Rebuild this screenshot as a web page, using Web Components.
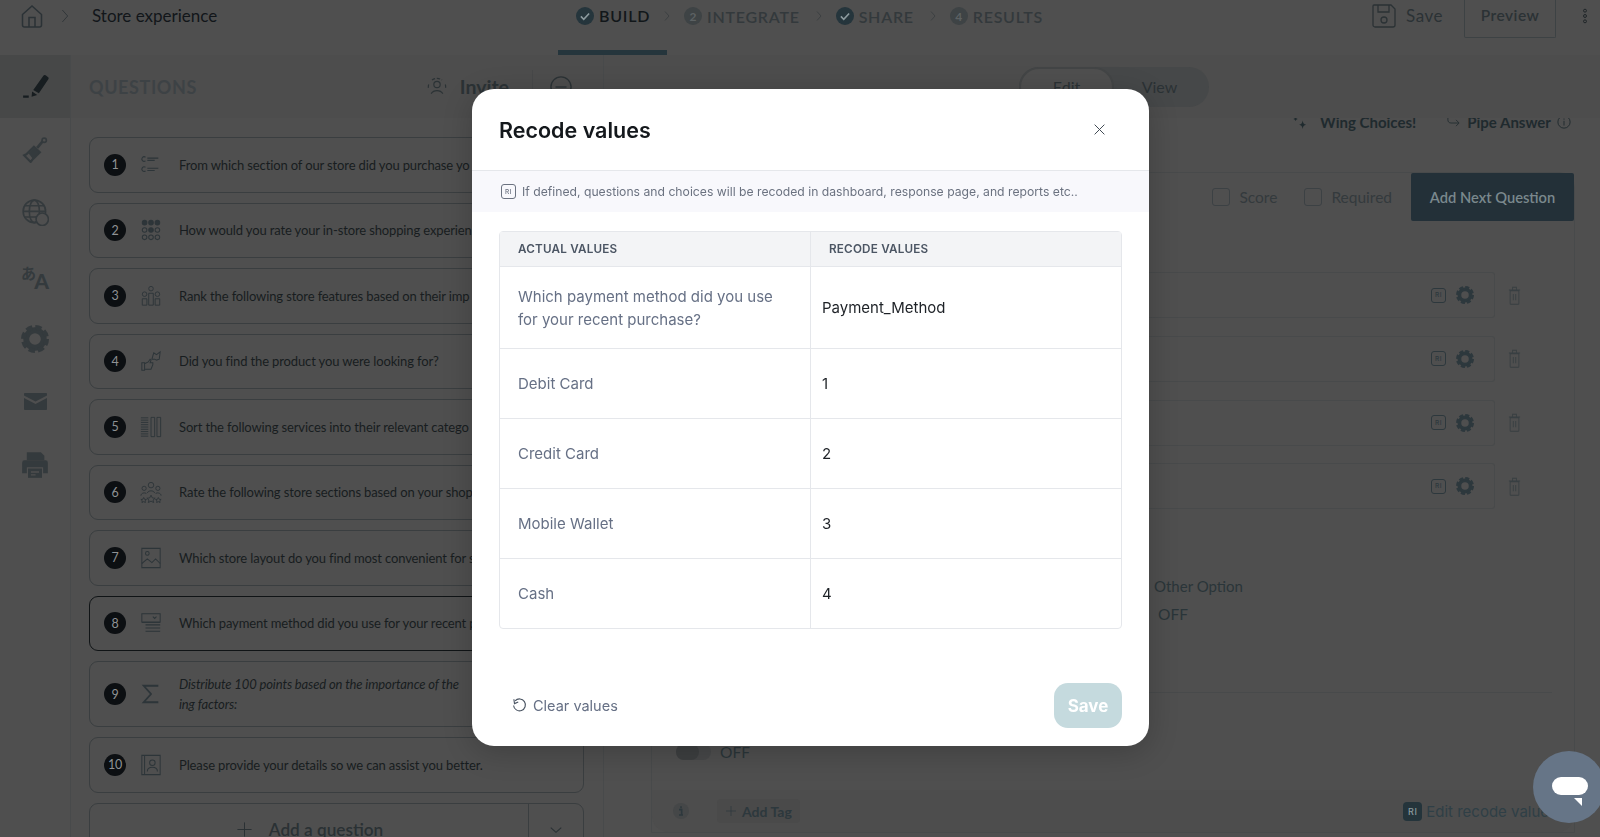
<!doctype html>
<html lang="en">
<head>
<meta charset="utf-8">
<title>Store experience</title>
<style>
html, body { margin: 0; height: 100%; overflow: hidden; background: #4f4f4f; }
</style>
</head>
<body>
<app-page></app-page>
<script>
const ICONS = {
	home: '<path d="M2.5 10.5 12 2l9.500 8.500V21a2 2 0 0 1-2 2h-15a2 2 0 0 1-2-2z" fill="none" stroke="currentColor" stroke-width="1.500"/><path d="M9 23v-9.500h6V23" fill="none" stroke="currentColor" stroke-width="1.500"/>',
	chevron: '<path d="M8 3l8 9-8 9" fill="none" stroke="currentColor" stroke-width="1.400"/>',
	down: '<path d="M3 8l9 8 9-8" fill="none" stroke="currentColor" stroke-width="1.800"/>',
	check: '<circle cx="12" cy="12" r="12" fill="currentColor"/><path d="M6.500 12.500l3.800 3.800 7.200-7.600" fill="none" stroke="#8c9a9e" stroke-width="2.200"/>',
	save: '<path d="M2 1h17l4 4v16a2 2 0 0 1-2 2H3a2 2 0 0 1-2-2V2a1 1 0 0 1 1-1z" fill="none" stroke="currentColor" stroke-width="1.300"/><path d="M6 1v7h11V1" fill="none" stroke="currentColor" stroke-width="1.300"/><circle cx="12" cy="16" r="3" fill="none" stroke="currentColor" stroke-width="1.300"/>',
	dots: '<g fill="none" stroke="currentColor" stroke-width="1.500"><circle cx="12" cy="4" r="2.200"/><circle cx="12" cy="12" r="2.200"/><circle cx="12" cy="20" r="2.200"/></g>',
	pencil: '<path d="M10 15 19 2.500a1.500 1.500 0 0 1 2-.400l2 1.500a1.500 1.500 0 0 1 .400 2L15 18z" fill="currentColor"/><path d="M9 16.500l4.500 3-5 1.500zM1 20h5v2H1z" fill="currentColor"/>',
	brush: '<path d="M11 9 4 16l-2 1 6 6 1.500-2 7-7z" fill="none" stroke="currentColor" stroke-width="2"/><path d="M6 15l5-5 5 4-6 6z" fill="currentColor"/><path d="M14 10l5-6" stroke="currentColor" stroke-width="2.500"/><circle cx="20.500" cy="3" r="2" fill="none" stroke="currentColor" stroke-width="1.500"/>',
	globe: '<g fill="none" stroke="currentColor" stroke-width="1.400"><circle cx="11" cy="11" r="10"/><ellipse cx="11" cy="11" rx="4.500" ry="10"/><path d="M1 11h20M2.500 6h17M2.500 16h17"/></g><circle cx="18" cy="18" r="5.500" fill="#4f4f4f" stroke="currentColor" stroke-width="1.400"/>',
	gear: '<circle cx="12" cy="12" r="7.500" fill="none" stroke="currentColor" stroke-width="5"/><circle cx="12" cy="12" r="10" fill="none" stroke="currentColor" stroke-width="4" stroke-dasharray="5.220 2.630"/>',
	mail: '<path d="M0 3.500 12 12 24 3.500V1a1 1 0 0 0-1-1H1a1 1 0 0 0-1 1zM0 7v16a1 1 0 0 0 1 1h22a1 1 0 0 0 1-1V7L12 15.500z" fill="currentColor"/>',
	printer: '<path d="M5 1h12l3 3v4H5z" fill="currentColor"/><path d="M1 10a2 2 0 0 1 2-2h18a2 2 0 0 1 2 2v9h-4v-5H5v5H1z" fill="currentColor"/><path d="M6 15h12v8H6z" fill="currentColor"/><path d="M8.500 18h7M8.500 20.500h4" stroke="#4f4f4f" stroke-width="1.200"/>',
	choice: '<g fill="none" stroke="currentColor" stroke-width="1.200"><path d="M6 3.500a2.500 2.500 0 1 0 0 4M6 14.500a2.500 2.500 0 1 0 0 4"/><path d="M8 4.500h12M8 7h8M8 15.500h12M8 18h8"/></g>',
	rating: '<g fill="none" stroke="currentColor" stroke-width="1.100"><circle cx="5" cy="4" r="2.500" fill="currentColor"/><circle cx="12" cy="4" r="2.500" fill="currentColor"/><circle cx="19" cy="4" r="2.500" fill="currentColor"/><circle cx="5" cy="12" r="2.500"/><circle cx="12" cy="12" r="2.500" fill="currentColor"/><circle cx="19" cy="12" r="2.500"/><circle cx="5" cy="20" r="2.500"/><circle cx="12" cy="20" r="2.500"/><circle cx="19" cy="20" r="2.500"/></g>',
	rank: '<g fill="none" stroke="currentColor" stroke-width="1"><circle cx="12" cy="4" r="2.500"/><circle cx="5" cy="10" r="2.500"/><circle cx="19" cy="10" r="2.500"/><path d="M2.500 15h5v7h-5zM9.500 9h5v13h-5zM16.500 15h5v7h-5z"/></g>',
	thumbs: '<g fill="none" stroke="currentColor" stroke-width="1.100"><path d="M2 14h3v8H2zM5 15l4-2 2-3 1 1-1 3h3v2l-2 5H5"/><path d="M13 10l2-7 3 2 4-3-1 8-3 1-2-1z"/></g>',
	bars: '<g fill="none" stroke="currentColor" stroke-width="1"><path d="M1 2h8M1 4.500h8M1 7h8M1 9.500h8M1 12h8M1 14.500h8M1 17h8M1 19.500h8M1 22h8"/><path d="M12 1.500h4v21h-4zM18.500 1.500h4v21h-4z"/></g>',
	people: '<g fill="none" stroke="currentColor" stroke-width="1"><circle cx="12" cy="4.500" r="3"/><circle cx="4.500" cy="8" r="2.300"/><circle cx="19.500" cy="8" r="2.300"/><path d="M8 13c1-3 7-3 8 0M1 16c0-3 5-4 6-2M23 16c0-3-5-4-6-2"/><path d="M12 15.500l1.500 3 3 .3-2.300 2 .7 2.700-2.900-1.500-2.900 1.500.7-2.700-2.300-2 3-.3zM4 18l1 2 2 .2-1.500 1.400.4 1.900L4 22.500l-1.900 1 .4-1.900L1 20.200l2-.2zM20 18l1 2 2 .2-1.500 1.400.4 1.900-1.900-1-1.900 1 .4-1.900-1.500-1.400 2-.2z"/></g>',
	image: '<g fill="none" stroke="currentColor" stroke-width="1.100"><path d="M2 1.500h20v21H2z"/><circle cx="8" cy="7" r="2"/><path d="M2 18l6-5 5 4 4-4 5 5"/></g>',
	payment: '<g fill="none" stroke="currentColor" stroke-width="1.100"><path d="M2 2h20v9H2z"/><path d="M14 5l2 2 2-2"/></g><path d="M6 14h16M6 17.500h16M6 21h16M2 11.500h20" stroke="currentColor" stroke-width="1.200"/>',
	sigma: '<path d="M20 3H4l8 9-8 9h16" fill="none" stroke="currentColor" stroke-width="2"/>',
	contact: '<g fill="none" stroke="currentColor" stroke-width="1.100"><path d="M2 1.500h20v21H2zM5 1.500v21"/><circle cx="13.500" cy="9.500" r="3"/><path d="M8 19c0-6 11-6 11 0"/></g>',
	invite: '<g fill="none" stroke="currentColor" stroke-width="1.400"><circle cx="12" cy="9" r="3.800"/><path d="M5 20c3-5 11-5 14 0"/><path d="M6 3.500a11 11 0 0 1 12 0M2 9a11 11 0 0 0 0 6M22 9a11 11 0 0 1 0 6" stroke-dasharray="4 2"/></g>',
	minus: '<g fill="none" stroke="currentColor" stroke-width="1.500"><circle cx="12" cy="12" r="11"/><path d="M6 12h12"/></g>',
	sparkle: '<path d="M15 9c.7 4 1.500 5 5 6-3.500 1-4.300 2-5 6-.7-4-1.500-5-5-6 3.500-1 4.300-2 5-6z" fill="currentColor"/><path d="M5 4l1 2 2 1-2 1-1 2-1-2-2-1 2-1z" fill="currentColor"/>',
	pipe: '<path d="M3 3v8c0 3 2 5 5 5h12M16 11l5 5-5 5" fill="none" stroke="currentColor" stroke-width="1.300"/>',
	info: '<g fill="none" stroke="currentColor" stroke-width="1.600"><circle cx="12" cy="12" r="10.500"/><path d="M12 10v8M12 6v2"/></g>',
	tagInfo: '<circle cx="12" cy="12" r="12" fill="#454748"/><path d="M9 10h4v8M9 18h6M12 5v3" fill="none" stroke="currentColor" stroke-width="2.400"/>',
	trash: '<g fill="none" stroke="currentColor" stroke-width="1.400"><path d="M5 6h14v16a1 1 0 0 1-1 1H6a1 1 0 0 1-1-1zM3 5h18M9 5V1.500h6V5M10 10v8M14 10v8"/></g>',
	undo: '<path d="M5 4.500A9.500 9.500 0 1 1 2.500 12" fill="none" stroke="currentColor" stroke-width="1.800"/><path d="M3 2l1 7 6-2.500" fill="none" stroke="currentColor" stroke-width="1.800"/>',
	close: '<path d="M3 3l18 18M21 3 3 21" fill="none" stroke="currentColor" stroke-width="1.800"/>',
	plus: '<path d="M12 2v20M2 12h20" fill="none" stroke="currentColor" stroke-width="1.400"/>',
};

function el (tag, css, html) {
	customElements.define(tag, class extends HTMLElement {
		connectedCallback () {
			if (this.shadowRoot) return;
			this.attachShadow({ mode: 'open' });
			this.shadowRoot.innerHTML = `<style>${css}</style>${typeof html === 'function' ? html(this) : html}`;
		}
	});
}

const sourceFont = `Lato, "Noto Sans", sans-serif`;
const modalFont = `Inter, "Noto Sans", sans-serif`;

el('ui-icon', ':host { display: inline-flex; flex: none; } svg { display: block; }', host => {
	const size = host.getAttribute('size') || 24;
	return `<svg width="${size}" height="${host.getAttribute('h') || size}" viewBox="0 0 24 24" preserveAspectRatio="none">${ICONS[host.getAttribute('name')]}</svg>`;
});

el('recode-icon', `
	:host { display: inline-flex; flex: none; align-items: center; justify-content: center; width: 13px; height: 13px; box-sizing: border-box; border: 1.200px solid currentColor; border-radius: 3px; font: 500 6.500px ${modalFont}; letter-spacing: .5px; }
	:host([filled]) { width: 19px; height: 19px; border: 0; border-radius: 4px; background: #24343b; color: #8b999e; font-size: 9px; }
`, '<slot>RI</slot>');

el('step-item', `
	:host { display: flex; align-items: center; gap: 5px; height: 31px; box-sizing: border-box; font: 600 16px ${sourceFont}; letter-spacing: .75px; color: #33393c; }
	:host([active]) { color: #12171a; }
	.num { width: 18px; height: 18px; border-radius: 50%; background: #3e4345; color: #5c6163; font: 700 12px ${sourceFont}; letter-spacing: 0; display: flex; align-items: center; justify-content: center; }
	ui-icon { color: #25353c; }
`, host => `${host.hasAttribute('num')
	? `<span class="num">${host.getAttribute('num')}</span>`
	: '<ui-icon name="check" size="18"></ui-icon>'}<slot></slot>`);

el('top-bar', `
	:host { display: flex; align-items: center; height: 55px; box-sizing: border-box; padding: 0 0 23px 20px; color: #171d20; }
	.home { color: #2b3236; }
	.sep { color: #2f3538; margin: 0 19px 0 13px; }
	.name { font: 400 17px ${sourceFont}; width: 466px; color: #12161a; margin-top: -1px; }
	.tab { display: flex; align-self: flex-start; height: 55px; box-sizing: border-box; padding: 0 17px 0 18px; border-bottom: 5px solid #25353c; margin-right: -6px; }
	.arrow { color: #33393c; margin: 0 11px 0 13px; }
	.right { margin-left: auto; align-self: flex-start; height: 32px; display: flex; align-items: center; color: #2b3235; font: 400 17px ${sourceFont}; letter-spacing: .5px; }
	.right ui-icon.floppy { margin-right: 10px; }
	.right span { margin-top: -1px; }
	.preview { width: 92px; height: 44px; margin-left: 21px; padding-bottom: 1px; box-sizing: border-box; border: 1px solid #3d4244; border-top: 0; border-radius: 0 0 2px 2px; display: flex; align-items: center; justify-content: center; font-size: 15.500px; font-weight: 600; flex: none; }
	.more { margin: 0 7px 0 21px; color: #1f2528; }
`, `
	<ui-icon class="home" name="home" size="24"></ui-icon>
	<ui-icon class="sep" name="chevron" size="16"></ui-icon>
	<span class="name">Store experience</span>
	<div class="tab"><step-item active>BUILD</step-item></div>
	<ui-icon class="arrow" name="chevron" size="12" style="margin-left:0"></ui-icon>
	<step-item num="2">INTEGRATE</step-item>
	<ui-icon class="arrow" name="chevron" size="12"></ui-icon>
	<step-item>SHARE</step-item>
	<ui-icon class="arrow" name="chevron" size="12"></ui-icon>
	<step-item num="4">RESULTS</step-item>
	<div class="right">
		<ui-icon class="floppy" name="save" size="24"></ui-icon>
		<span>Save</span>
		<div class="preview">Preview</div>
		<ui-icon class="more" name="dots" size="16"></ui-icon>
	</div>
`);

el('side-rail', `
	:host { display: flex; flex-direction: column; width: 71px; flex: none; border-right: 1px solid #484a4b; box-sizing: border-box; color: #343a3d; }
	.item { height: 63px; display: flex; align-items: center; justify-content: center; }
	.active { background: #474848; color: #171d20; }
	.lang { display: grid; width: 28px; height: 28px; grid-template: 1fr / 1fr; line-height: 1; }
	.lang b { grid-area: 1 / 1; font: 700 15px "Noto Sans CJK JP", sans-serif; align-self: start; justify-self: start; }
	.lang span { grid-area: 1 / 1; font: 900 21px ${sourceFont}; align-self: end; justify-self: end; line-height: 18px; }
`, `
	<div class="item active"><ui-icon name="pencil" size="27"></ui-icon></div>
	<div class="item"><ui-icon name="brush" size="26"></ui-icon></div>
	<div class="item"><ui-icon name="globe" size="27"></ui-icon></div>
	<div class="item"><div class="lang"><b>あ</b><span>A</span></div></div>
	<div class="item"><ui-icon name="gear" size="28"></ui-icon></div>
	<div class="item"><ui-icon name="mail" size="23" h="17"></ui-icon></div>
	<div class="item"><ui-icon name="printer" size="28"></ui-icon></div>
`);

el('question-card', `
	:host { display: flex; align-items: center; flex: none; height: 55.500px; box-sizing: border-box; border: 1px solid #3a3e40; border-radius: 9px; padding-left: 14px; color: #181d20; font: 400 13px ${sourceFont}; letter-spacing: -.13px; white-space: nowrap; overflow: hidden; }
	:host([selected]) { border-color: #101416; }
	:host([tall]) { height: 66px; }
	:host([tall]) .text { font-style: italic; white-space: normal; line-height: 20px; }
	.num { width: 22px; height: 22px; border-radius: 50%; background: #0c0f12; color: #8f9294; font: 400 12.500px ${sourceFont}; display: flex; align-items: center; justify-content: center; flex: none; }
	ui-icon { margin: 0 17px 0 14px; color: #2d3539; }
`, host => `<span class="num">${host.getAttribute('num')}</span><ui-icon name="${host.getAttribute('icon')}" size="22"></ui-icon><span class="text"><slot></slot></span>`);

el('add-question', `
	:host { display: flex; height: 54px; flex: none; box-sizing: border-box; border: 1px solid #3a3e40; border-radius: 9px; color: #2a3134; font: 600 17.200px ${sourceFont}; }
	.main { flex: 1; display: flex; align-items: center; justify-content: center; gap: 16px; padding-left: 1px; }
	.drop { width: 54px; border-left: 1px solid #3a3e40; display: flex; align-items: center; justify-content: center; }
`, `
	<div class="main"><ui-icon name="plus" size="17"></ui-icon>Add a question</div>
	<div class="drop"><ui-icon name="down" size="14"></ui-icon></div>
`);

el('questions-pane', `
	:host { display: flex; flex-direction: column; width: 533px; flex: none; border-right: 1px solid #484a4b; box-sizing: border-box; height: 782px; }
	.head { display: flex; align-items: center; height: 63px; flex: none; padding: 0 31px 0 18px; background: #4d4d4d; }
	.title { font: 700 18px ${sourceFont}; letter-spacing: .6px; color: #3d4245; }
	.invite { margin-left: auto; display: flex; align-items: center; gap: 13px; font: 700 19.500px ${sourceFont}; color: #2b3235; }
	.rule { width: 1px; height: 34px; background: #474849; margin-left: 10px; }
	.list { display: flex; flex-direction: column; gap: 10px; padding: 19px 19px 0 18px; overflow: hidden; flex: 1; }
`, `
	<div class="head">
		<span class="title">QUESTIONS</span>
		<div class="invite"><ui-icon name="invite" size="20"></ui-icon>Invite<span class="rule"></span><ui-icon name="minus" size="22" style="margin-left:4px"></ui-icon></div>
	</div>
	<div class="list"><slot></slot></div>
`);

el('option-row', `
	:host { display: flex; align-items: center; gap: 12px; height: 44px; flex: none; color: #2d383d; }
	.box { flex: 1; height: 100%; display: flex; align-items: center; justify-content: flex-end; gap: 10px; padding-right: 20px; border: 1px solid #484a4b; border-left: 0; border-radius: 3px; }
	.trash { color: #383f42; }
`, `
	<div class="box"><recode-icon style="width:15px;height:15px"></recode-icon><ui-icon name="gear" size="18"></ui-icon></div>
	<ui-icon class="trash" name="trash" size="15" h="19"></ui-icon>
`);

el('editor-pane', `
	:host { display: flex; flex-direction: column; flex: 1; min-width: 0; height: 782px; overflow: hidden; color: #2d383d; font: 400 15.500px ${sourceFont}; }
	.head { display: flex; align-items: center; height: 63px; flex: none; background: #4d4d4d; position: relative; z-index: 1; padding-left: 415px; }
	.toggle { display: flex; width: 190px; height: 40px; border-radius: 20px; background: #464849; font-size: 16px; color: #2b3235; }
	.toggle span { flex: 1; display: flex; align-items: center; justify-content: center; border-radius: 20px; padding-right: 4px; }
	.toggle .on { flex: none; width: 95px; padding: 0; background: #4f4f4f; border: 2px solid #434546; box-sizing: border-box; }
	.actions { display: flex; align-items: center; height: 40px; flex: none; margin-top: -16px; padding-left: 688px; color: #1f2a2e; font-weight: 700; font-size: 15px; }
	.actions span.pipe { margin: 0 6px 0 30px; font-weight: 400; }
	.actions .sp { margin-right: 11px; }
	.panel { flex: 1; margin: 30px 25px 4px 47px; border: 1px solid #484a4b; border-radius: 16px 16px 0 0; display: flex; flex-direction: column; }
	.bar { display: flex; align-items: center; justify-content: flex-end; height: 48px; flex: none; }
	.check { width: 18px; height: 18px; box-sizing: border-box; border: 1.200px solid #3c4144; border-radius: 3px; margin-right: 9px; }
	.label { color: #343a3d; margin-right: 27px; font-size: 15.500px; }
	.label:nth-of-type(4) { margin-right: 19px; }
	button { width: 163px; height: 48px; border: 0; background: #233038; color: #7a888d; font: 600 14.700px ${sourceFont}; border-radius: 2px; }
	.rows { display: flex; flex-direction: column; gap: 19.750px; padding: 52px 52px 0 350px; flex: none; }
	.other { margin: 69px 0 0 502px; color: #2a3539; font-size: 15px; }
	.other div { margin: 10px 0 0 4px; font-size: 15.500px; }
	.line { height: 1px; margin: 69px 22px 0 0; background: #484a4b; flex: none; }
	.toggle-row { display: flex; align-items: center; gap: 9px; margin: 50px 0 0 24px; font-size: 15.500px; color: #2a3539; }
	.switch { width: 35px; height: 16px; border-radius: 8px; background: #474849; }
	.switch i { display: block; width: 23px; height: 16px; border-radius: 8px; background: #3d3f40; }
	.foot { display: flex; align-items: center; height: 42px; margin-top: 29px; background: #4d4d4d; padding-left: 21px; border-radius: 0 0 16px 16px; flex: none; font-size: 14px; }
	.foot .i { color: #2d383d; width: 16px; margin-right: 28px; }
	.chip { display: flex; align-items: center; gap: 5px; height: 24px; padding: 0 8px; background: #4a4a4a; border-radius: 4px; font-weight: 700; color: #2d383d; }
	.edit { margin-left: auto; display: flex; align-items: center; gap: 4px; font: 400 15px ${modalFont}; color: #2f3f46; margin-right: 17px; white-space: nowrap; }
`, `
	<div class="head">
		<div class="toggle"><span class="on">Edit</span><span>View</span></div>
	</div>
	<div class="actions">
		<ui-icon class="sp" name="sparkle" size="17"></ui-icon>Wing Choices!
		<span class="pipe"><ui-icon name="pipe" size="15"></ui-icon></span>Pipe Answer
		<ui-icon name="info" size="14" style="margin-left:6px"></ui-icon>
	</div>
	<div class="panel">
		<div class="bar">
			<span class="check"></span><span class="label">Score</span>
			<span class="check"></span><span class="label">Required</span>
			<button>Add Next Question</button>
		</div>
		<div class="rows">
			<option-row></option-row><option-row></option-row><option-row></option-row><option-row></option-row>
		</div>
		<div class="other">Other Option<div>OFF</div></div>
		<div class="line"></div>
		<div class="toggle-row"><span class="switch"><i></i></span>OFF</div>
		<div class="foot">
			<ui-icon class="i" name="tagInfo" size="16"></ui-icon>
			<div class="chip"><ui-icon name="plus" size="12"></ui-icon>Add Tag</div>
			<div class="edit"><recode-icon filled></recode-icon>Edit recode values</div>
		</div>
	</div>
`);

el('recode-modal', `
	:host { position: fixed; z-index: 10; left: 472px; top: 89px; width: 677px; height: 657px; background: #fff; border-radius: 22px; box-shadow: 0 6px 30px #0003; display: flex; flex-direction: column; font-family: ${modalFont}; color: #667085; overflow: hidden; }
	header { display: flex; align-items: center; justify-content: space-between; height: 81px; padding: 0 43px 0 27px; flex: none; border-bottom: 1px solid #e5e7eb; }
	h2 { margin: 0; font: 600 21.500px ${modalFont}; color: #14181c; }
	header ui-icon { color: #3d4650; }
	.info { display: flex; align-items: center; gap: 6px; height: 41px; padding-left: 29px; background: #f8f8fc; font-size: 12.200px; color: #6b7280; flex: none; }
	.info recode-icon { width: 15px; height: 15px; color: #6b7280; }
	.table { margin: 19px 27px 0; display: grid; grid-template-columns: 311px 1fr; grid-template-rows: 35px 82px 70px 70px 70px 69px; border: 1px solid #e5e7eb; border-radius: 4px; flex: none; font-size: 15px; line-height: 22.500px; }
	.table > div { display: flex; align-items: center; padding: 2px 0 0 18px; border-bottom: 1px solid #e5e7eb; }
	.table > div:nth-child(odd) { border-right: 1px solid #e5e7eb; }
	.table > div:nth-last-child(-n+2) { border-bottom: 0; }
	.table .th { background: #f3f4f6; font-size: 11.700px; font-weight: 600; color: #4b5563; letter-spacing: .2px; padding-top: 0; }
	.table .val { padding-left: 11px; color: #1d2126; }
	footer { display: flex; align-items: center; justify-content: space-between; margin-top: auto; padding: 0 27px 18px 40px; }
	.clear { display: flex; align-items: center; gap: 6px; font-size: 14.500px; }
	.clear ui-icon { color: #4b5563; }
	button { width: 68px; height: 45px; border: 0; border-radius: 14px; background: #c5dade; color: #fff; font: 700 17px ${modalFont}; }
`, `
	<header>
		<h2>Recode values</h2>
		<ui-icon name="close" size="13"></ui-icon>
	</header>
	<div class="info"><recode-icon></recode-icon>If defined, questions and choices will be recoded in dashboard, response page, and reports etc..</div>
	<div class="table">
		<div class="th">ACTUAL VALUES</div><div class="th">RECODE VALUES</div>
		<div>Which payment method did you use<br>for your recent purchase?</div><div class="val">Payment_Method</div>
		<div>Debit Card</div><div class="val">1</div>
		<div>Credit Card</div><div class="val">2</div>
		<div>Mobile Wallet</div><div class="val">3</div>
		<div>Cash</div><div class="val">4</div>
	</div>
	<footer>
		<div class="clear"><ui-icon name="undo" size="15"></ui-icon>Clear values</div>
		<button>Save</button>
	</footer>
`);

el('chat-button', `
	:host { position: fixed; z-index: 11; left: 1533px; top: 751px; width: 72px; height: 72px; border-radius: 50%; background: #667587; }
	svg { display: block; }
`, `<svg width="72" height="72" viewBox="0 0 72 72"><rect x="19" y="26" width="36" height="18" rx="9" fill="#fff"/><path d="M41 47h8v8z" fill="#fff"/></svg>`);

el('app-page', `
	:host { display: block; width: 1600px; height: 837px; overflow: hidden; background: #4f4f4f; }
	.body { display: flex; height: 782px; }
`, `
	<top-bar></top-bar>
	<div class="body">
		<side-rail></side-rail>
		<questions-pane>
			<question-card num="1" icon="choice">From which section of our store did you purchase yo</question-card>
			<question-card num="2" icon="rating">How would you rate your in-store shopping experien</question-card>
			<question-card num="3" icon="rank">Rank the following store features based on their imp</question-card>
			<question-card num="4" icon="thumbs">Did you find the product you were looking for?</question-card>
			<question-card num="5" icon="bars">Sort the following services into their relevant catego</question-card>
			<question-card num="6" icon="people">Rate the following store sections based on your shop</question-card>
			<question-card num="7" icon="image">Which store layout do you find most convenient for s</question-card>
			<question-card num="8" icon="payment" selected>Which payment method did you use for your recent p</question-card>
			<question-card num="9" icon="sigma" tall>Distribute 100 points based on the importance of the<br>ing factors:</question-card>
			<question-card num="10" icon="contact">Please provide your details so we can assist you better.</question-card>
			<add-question></add-question>
		</questions-pane>
		<editor-pane></editor-pane>
	</div>
	<recode-modal></recode-modal>
	<chat-button></chat-button>
`);
</script>
</body>
</html>
